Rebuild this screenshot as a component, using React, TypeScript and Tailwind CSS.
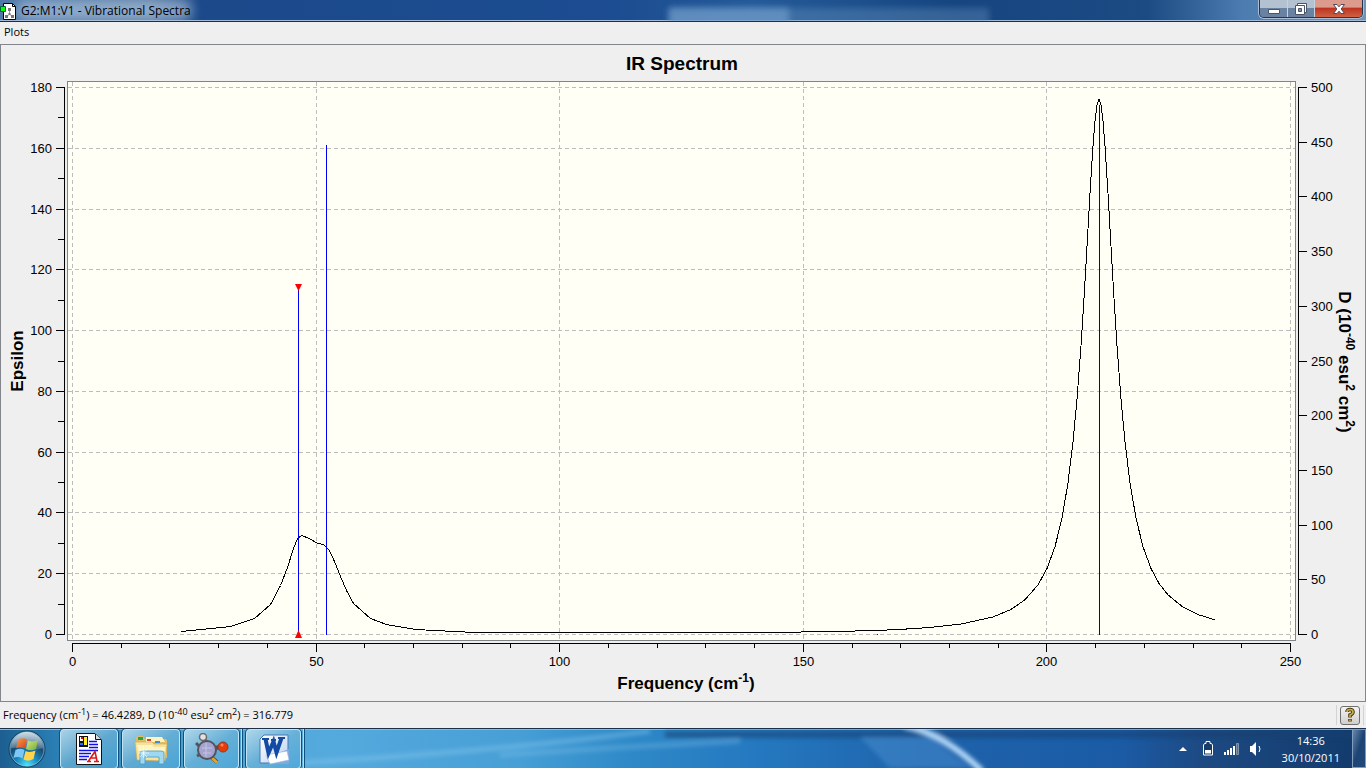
import type { ReactNode } from "react";

const X0 = 72;
const X_SCALE = 1218 / 250;
const Y0 = 634;
const Y_SPAN = 547;

const px = (f: number) => Math.round(X0 + f * X_SCALE) + 0.5;
const yLeft = (v: number) => Math.round(Y0 - (v / 180) * Y_SPAN) + 0.5;
const yRight = (v: number) => Math.round(Y0 - (v / 500) * Y_SPAN) + 0.5;

const range = (from: number, to: number, step: number) =>
  Array.from({ length: Math.round((to - from) / step) + 1 }, (_, i) => from + i * step);

const lowBand: [number, number][] = [
  [181, 631], [230, 626], [254, 618], [270, 604], [280, 585], [287, 567], [293, 548], [297, 538],
  [301, 535], [309, 538], [317, 543], [323, 544], [329, 550], [334, 561], [340, 576], [346, 590],
  [353, 603], [370, 618], [386, 624], [415, 629], [474, 632], [768, 632], [834, 631], [876, 630],
];
const highOffsets = [
  -198, -169, -138, -106, -88, -74, -61, -52, -44, -37, -31, -26, -22, -18, -15, -12, -9, -6, -4, -2, 0,
  2, 4, 6, 9, 12, 15, 18, 22, 26, 31, 37, 44, 52, 60, 69, 84, 100, 116,
];
const highBand = highOffsets.map((d): [number, number] => [
  1098.5 + d,
  Y0 - 535 / (1 + (d / 19.5) ** 2),
]);
const curve = [...lowBand, ...highBand].map(([x, y]) => `${x + 0.5},${y + 0.5}`).join(" ");

function SpectrumChart() {
  return (
    <svg
      viewBox="1 45 1364 656"
      className="block min-h-0 w-full flex-1 font-['Liberation_Sans',Arial,sans-serif]"
      role="img"
      aria-label="IR Spectrum"
    >
      <g shapeRendering="crispEdges" fill="none" stroke="#000">
        <rect x="67.5" y="81.5" width="1228" height="559" fill="#fffff5" stroke="#808487" />
        <g stroke="#bdbdbd" strokeDasharray="4 3">
          {range(0, 250, 50).map((f) => (
            <path key={f} d={`M${px(f)} 82V640`} />
          ))}
          {range(0, 180, 20).map((v) => (
            <path key={v} d={`M68 ${yLeft(v)}H1295`} />
          ))}
        </g>
        <path d="M64.5 87V635M1298.5 87V635M72 643.5H1291" />
        {range(0, 180, 10).map((v) => (
          <path key={v} d={`M${v % 20 ? 58 : 56} ${yLeft(v)}H65`} />
        ))}
        {range(0, 500, 50).map((v) => (
          <path key={v} d={`M1298 ${yRight(v)}H1307`} />
        ))}
        {range(0, 250, 10).map((f) => (
          <path key={f} d={`M${px(f)} 643V${f % 50 ? 648 : 652}`} />
        ))}
        <path d="M298.5 289V634M326.5 145V635M877 634.5H878" stroke="#0000f5" />
        <path d="M1099.500 105V635" stroke="#0000c0" />
        <polyline points={curve} />
      </g>
      <path d="M295 284H302L298.5 291ZM295 638H302L298.5 630Z" fill="#f00" />

      <g fontSize="13">
        <g textAnchor="end">
          {range(0, 180, 20).map((v) => (
            <text key={v} x="52" y={yLeft(v) + 4.5}>{v}</text>
          ))}
        </g>
        {range(0, 500, 50).map((v) => (
          <text key={v} x="1311" y={yRight(v) + 4.5}>{v}</text>
        ))}
        <g textAnchor="middle">
          {range(0, 250, 50).map((f) => (
            <text key={f} x={px(f)} y="666">{f}</text>
          ))}
        </g>
      </g>
      <g fontWeight="bold" textAnchor="middle">
        <text x="682" y="70" fontSize="19">IR Spectrum</text>
        <g fontSize="17">
          <text x="686" y="689">
            Frequency (cm<tspan dy="-7" fontSize="12">-1</tspan><tspan dy="7">)</tspan>
          </text>
          <text transform="translate(23 361) rotate(-90)">Epsilon</text>
          <text transform="translate(1339 362) rotate(90)">
            D (10<tspan dy="-7" fontSize="12">-40</tspan><tspan dy="7"> esu</tspan>
            <tspan dy="-7" fontSize="12">2</tspan><tspan dy="7"> cm</tspan>
            <tspan dy="-7" fontSize="12">2</tspan><tspan dy="7">)</tspan>
          </text>
        </g>
      </g>
    </svg>
  );
}

function MoleculeDocIcon() {
  return (
    <svg width="17" height="17" viewBox="0 0 17 17" aria-hidden="true">
      <path d="M3.5.5H12.5L15.5 3.5V16.5H3.5Z" fill="#fff" stroke="#000" />
      <path d="M12.5.5V3.5H15.5" fill="none" stroke="#000" />
      <path d="M9.5 7V11L6.5 14M9.5 11L12.5 14" stroke="#999" fill="none" />
      <path d="M8 5h3v3H8zM5 12h3v3H5zM11 12h3v3h-3zM8.500 10h2v2h-2z" fill="#777" />
      <path d="M.5 3.500H5.500V8.500H.5Z" fill="#0f0" stroke="#063" />
    </svg>
  );
}

function StartOrb() {
  return (
    <svg width="40" height="40" viewBox="0 0 40 40" aria-hidden="true">
      <defs>
        <radialGradient id="orb" cx="50%" cy="95%" r="90%">
          <stop offset="0" stopColor="#4fe3ff" />
          <stop offset=".35" stopColor="#1789bd" />
          <stop offset=".65" stopColor="#174b73" />
          <stop offset="1" stopColor="#6b94ad" />
        </radialGradient>
        <linearGradient id="gloss" x1="0" y1="0" x2="0" y2="1">
          <stop offset="0" stopColor="#fff" stopOpacity=".65" />
          <stop offset="1" stopColor="#fff" stopOpacity=".15" />
        </linearGradient>
        <linearGradient id="flagRed" x1="0" y1="0" x2="1" y2="1">
          <stop offset="0" stopColor="#f7a04a" />
          <stop offset="1" stopColor="#d8421c" />
        </linearGradient>
        <linearGradient id="flagGreen" x1="0" y1="0" x2="1" y2="1">
          <stop offset="0" stopColor="#d7e88a" />
          <stop offset="1" stopColor="#6fae2b" />
        </linearGradient>
      </defs>
      <circle cx="20" cy="20" r="18" fill="url(#orb)" stroke="#123f60" />
      <circle cx="20" cy="20" r="17" fill="none" stroke="#9fc4da" strokeOpacity=".6" />
      <path d="M4 19A16 16 0 0 1 36 19Q28 22 20 20T4 19Z" fill="url(#gloss)" />
      <path d="M11.500 10.500Q16 8 20 10.500L18 19Q14 17 9 19Z" fill="url(#flagRed)" />
      <path d="M21 11.500Q25 13.500 31 11L29 20Q24 22.500 19 20Z" fill="url(#flagGreen)" />
      <path d="M8.500 21Q13 18.500 17.500 21L15.500 29.500Q11 27 6.500 29Z" fill="#7cc7f5" />
      <path d="M18.500 22Q23 24 28.500 21.500L26.500 30Q21 33 16.500 30.500Z" fill="#ffd34a" />
    </svg>
  );
}

function DocumentIcon() {
  return (
    <svg width="32" height="32" viewBox="0 0 32 32" aria-hidden="true">
      <path d="M3.500 .5H22L28.500 7V31.500H3.500Z" fill="#fff" stroke="#111" />
      <path d="M22.500 1V6.500H28" fill="#ddd" stroke="#111" />
      <path d="M6 3H15V14H6Z" fill="#111" />
      <path d="M7 4H10V8H7Z" fill="#fff" />
      <path d="M8 4H10V6H8Z" fill="#f00" />
      <path d="M11 4H14V12H11Z" fill="#ffec27" />
      <path d="M7 10H10V12H7Z" fill="#2b6cff" />
      <path
        d="M16 8.500H24M16 11.500H25M16 14.500H25M6 17.500H25M6 20.500H18M6 23.500H16M6 26.500H14"
        stroke="#1010e8"
        strokeWidth="1.6"
      />
      <path d="M14 28.500H18M21 28.500H26M15.500 28L22 18.500L24 28M18 25H23" stroke="#e01818" strokeWidth="1.600" fill="none" />
    </svg>
  );
}

function ExplorerIcon() {
  return (
    <svg width="34" height="32" viewBox="0 0 34 32" aria-hidden="true">
      <path d="M2 6Q2 3 5 3H9L11 6H31Q33 6 33 8V25H3Z" fill="#e3bd60" />
      <path d="M4 4H9V7H4Z" fill="#28a745" />
      <path d="M12 4H28L31 9H12Z" fill="#fff3c2" />
      <path d="M13 6H17V8H13Z" fill="#d9402e" />
      <path d="M21 8H26V10H21Z" fill="#3b8ede" />
      <path d="M1 9H18L20 11H33L31 28L3 27Z" fill="#f7e29a" stroke="#c9a857" strokeWidth=".6" />
      <path d="M3 12H18L20 14H31V18H4Z" fill="#fff4c4" />
      <path d="M6 31V20Q6 18 9 18H27Q30 18 30 20V31H25V24H11V31Z" fill="#9ed8f2" stroke="#4c9bc4" strokeWidth=".8" />
      <path d="M9.500 13V25M4 20H15M6 16L13 24M13 16L6 24" stroke="#fff" strokeOpacity=".8" strokeWidth=".8" />
    </svg>
  );
}

function MoleculeIcon() {
  return (
    <svg width="34" height="32" viewBox="0 0 34 32" aria-hidden="true">
      <path d="M9 6L11 10M18 16L24 14M16 24L22 29" stroke="#5c4a40" strokeWidth="4" />
      <path d="M17 25L22 29.500" stroke="#e4a32b" strokeWidth="3" />
      <path d="M4 13L1 10M4 22L2 23" stroke="#555" strokeWidth="3" />
      <circle cx="12" cy="17" r="9" fill="#a5a4cf" stroke="#55535f" strokeWidth="2" />
      <path d="M7 15H17M8 20H16M11 10V24" stroke="#c4c2e4" strokeWidth="1" />
      <circle cx="8" cy="4" r="3.500" fill="#e2e2e2" stroke="#6a6a6a" strokeWidth="1.500" />
      <circle cx="28" cy="14" r="5" fill="#e63c0c" stroke="#8d3c24" />
      <circle cx="27" cy="12" r="1.500" fill="#ff8858" />
    </svg>
  );
}

function WordIcon() {
  return (
    <svg width="32" height="32" viewBox="0 0 32 32" aria-hidden="true">
      <defs>
        <linearGradient id="wordPage" x1="0" y1="0" x2="1" y2="1">
          <stop offset="0" stopColor="#fff" />
          <stop offset="1" stopColor="#b9d2f1" />
        </linearGradient>
      </defs>
      <path d="M2 6L6 2H30V30H2Z" fill="url(#wordPage)" stroke="#4a78b5" />
      <path d="M20 20L31 16V31H14Z" fill="#7fa9df" />
      <path d="M8 22L29 18L31 27L12 31Z" fill="#fff" stroke="#9db9dd" strokeWidth=".6" />
      <path d="M7.500 6L10.500 20L15.500 8.500L18.500 19.500L23.500 5" fill="none" stroke="#134aa4" strokeWidth="4" />
      <path d="M4 6H11M13 7H18M20 5H27" stroke="#134aa4" strokeWidth="2" />
    </svg>
  );
}

const taskButton =
  "flex h-10 items-center justify-center rounded-sm border border-[#bfe4f6] bg-linear-to-br from-[#b9dcec]/90 via-[#6fb4d8]/70 to-[#4aa8da]/60 shadow-[0_0_0_1px_#12507c]";

function TaskButton({ label, stacked, children }: { label: string; stacked?: boolean; children: ReactNode }) {
  if (!stacked) {
    return (
      <button type="button" aria-label={label} className={`${taskButton} w-[58px]`}>
        {children}
      </button>
    );
  }
  return (
    <div className="flex h-10 border-r border-[#dff4ff]/70 pr-0.5 shadow-[1px_0_0_#12507c]">
      <button type="button" aria-label={label} className={`${taskButton} w-[55px]`}>
        {children}
      </button>
    </div>
  );
}

function TitleBar() {
  return (
    <header className="relative flex h-[22px] shrink-0 items-start justify-between overflow-hidden border-b border-[#1b2d4d] bg-[linear-gradient(90deg,#4f79a9_0px,#55789f_150px,#1b498a_200px,#1c4c91_45%,#245b99_55%,#164580_70%,#1c4a83_84%,#4c7cb0_91%,#7093b7_100%)] shadow-[inset_0_-1px_0_#a3bad6]">
      <div className="absolute top-0 left-4 h-5 w-44 rounded-full bg-[#b9cde6]/60 blur-[6px]" />
      <div className="absolute top-2 left-[49%] h-5 w-[120px] bg-[#7aa5d3]/60 blur-[3px]" />
      <div className="absolute top-2 left-[49%] h-5 w-[320px] bg-[#6f9ac4]/35 blur-[3px]" />
      <div className="relative flex items-center gap-1 pt-[2px]">
        <MoleculeDocIcon />
        <h1 className="text-[12px] leading-[18px] text-black">G2:M1:V1 - Vibrational Spectra</h1>
      </div>
      <div className="relative mr-[3px] flex h-[18px] overflow-hidden rounded-b-[5px] border border-t-0 border-[#26364d] shadow-[0_0_0_1px_#a9bed6]">
        <button type="button" aria-label="Minimize" className="flex w-7 items-center justify-center border-r border-[#c4d2e2] bg-linear-to-b from-[#b3c1d1] from-45% to-[#6a82a2] to-50%">
          <svg width="14" height="14" viewBox="0 0 14 14" aria-hidden="true">
            <path d="M1.500 7.500H12.500V11.500H1.500Z" fill="#fff" stroke="#4a5567" />
          </svg>
        </button>
        <button type="button" aria-label="Restore" className="flex w-[27px] items-center justify-center border-r border-[#c4d2e2] bg-linear-to-b from-[#b3c1d1] from-45% to-[#6a82a2] to-50%">
          <svg width="14" height="14" viewBox="0 0 14 14" aria-hidden="true">
            <path d="M3.500 1.500H12.500V10.500H3.500Z" fill="#fff" stroke="#4a5567" />
            <path d="M1.500 3.500H10.500V12.500H1.500Z" fill="#fff" stroke="#4a5567" />
            <path d="M4.500 6.500H7.500V9.500H4.500Z" fill="#7d93ad" stroke="#4a5567" />
          </svg>
        </button>
        <button type="button" aria-label="Close" className="flex w-[47px] items-center justify-center bg-linear-to-b from-[#dc9b8d] from-40% via-[#bd3520] via-50% to-[#cf6044]">
          <svg width="14" height="14" viewBox="0 0 14 14" aria-hidden="true">
            <path d="M1.500 2.500H5L7 4.800L9 2.500H12.500L9.200 7L12.500 11.500H9L7 9.200L5 11.500H1.500L4.800 7Z" fill="#fff" stroke="#50495a" />
          </svg>
        </button>
      </div>
    </header>
  );
}

function StatusBar() {
  return (
    <footer className="flex h-[26px] shrink-0 items-center justify-between pr-[2px] pl-[3px]">
      <p className="text-[11px] leading-4 text-black">
        Frequency (cm<sup className="text-[9px]">-1</sup>) = 46.4289, D (10<sup className="text-[9px]">-40</sup> esu
        <sup className="text-[9px]">2</sup> cm<sup className="text-[9px]">2</sup>) = 316.779
      </p>
      <div className="flex h-5 items-center border-x border-[#d3d3d3] px-[3px]">
        <button
          type="button"
          aria-label="Help"
          className="flex h-[19px] w-5 items-center justify-center rounded-[3px] border border-[#707070] bg-linear-to-b from-[#f4f4f4] to-[#cfcfcf]"
        >
          <svg width="12" height="16" viewBox="0 0 12 16" aria-hidden="true">
            <path d="M3 5Q3 2.500 6 2.500T9 5Q9 7 6 8V10.500M6 12V14.500" fill="none" stroke="#4b3b08" strokeWidth="3.600" />
            <path d="M3 5Q3 2.500 6 2.500T9 5Q9 7 6 8V10M6 12.500V14" fill="none" stroke="#c9b052" strokeWidth="1.600" />
          </svg>
        </button>
      </div>
    </footer>
  );
}

function Taskbar() {
  return (
    <nav aria-label="Taskbar" className="relative flex h-10 shrink-0 items-stretch justify-between overflow-hidden border-t border-[#1b3149] bg-[linear-gradient(90deg,#1c5f90_0%,#2a7eb3_4%,#4aa3d2_14%,#55aadd_24%,#479fd6_38%,#2e89c7_46%,#2579c0_55%,#1e63ab_68%,#1b5ba6_82%,#1d4a83_88%,#123a6b_100%)] shadow-[inset_0_1px_0_#8fb8d8]">
      <svg className="absolute inset-0 size-full" viewBox="0 0 1366 39" preserveAspectRatio="none" aria-hidden="true">
        <defs>
          <filter id="soft" x="-10%" y="-50%" width="120%" height="200%">
            <feGaussianBlur stdDeviation="2" />
          </filter>
        </defs>
        <g filter="url(#soft)">
          <path d="M300 34Q500 22 650 2" stroke="#8ccaf0" strokeOpacity=".4" strokeWidth="5" fill="none" />
          <path d="M500 26Q620 18 740 12" stroke="#8ccaf0" strokeOpacity=".3" strokeWidth="5" fill="none" />
          <path d="M665 2H1366V9H665Z" fill="#10406f" fillOpacity=".55" />
          <path d="M860 8H930L970 39H890Z" fill="#5a9ddc" fillOpacity=".35" />
          <path d="M905 -4Q945 6 982 42" stroke="#b4d8f8" strokeWidth="6" fill="none" />
        </g>
      </svg>
      <div className="relative flex items-start">
        <button type="button" aria-label="Start" className="flex w-[54px] items-center justify-center">
          <StartOrb />
        </button>
        <div className="flex gap-1 pl-1.5">
          <TaskButton label="GaussView"><DocumentIcon /></TaskButton>
          <TaskButton label="File explorer"><ExplorerIcon /></TaskButton>
          <TaskButton label="Molecules" stacked><MoleculeIcon /></TaskButton>
          <TaskButton label="Word" stacked><WordIcon /></TaskButton>
        </div>
      </div>
      <div className="relative flex items-center text-white">
        <button type="button" aria-label="Show hidden icons" className="mr-3 flex">
          <svg width="10" height="6" viewBox="0 0 10 6" aria-hidden="true">
            <path d="M1 5L5 1L9 5Z" fill="#fff" />
          </svg>
        </button>
        <div className="flex items-center gap-2">
          <svg width="16" height="18" viewBox="0 0 16 18" aria-hidden="true">
            <path d="M4.500 3.500H6V1.500H10V3.500H11.500L12.500 5V15H3.500V5Z" fill="#183b68" stroke="#fff" />
            <path d="M5 10H11V13.500H5Z" fill="#fff" />
          </svg>
          <svg width="16" height="16" viewBox="0 0 16 16" aria-hidden="true">
            <path d="M0 11H2V14H0ZM3 9H5V14H3ZM6 7H8V14H6ZM9 5H11V14H9Z" fill="#fff" />
            <path d="M12.500 2.500H14.500V13.500H12.500Z" fill="#53708f" stroke="#7e95ad" />
          </svg>
          <svg width="16" height="16" viewBox="0 0 16 16" aria-hidden="true">
            <path d="M2 5H4L8 1V15L4 11H2Z" fill="#fff" />
            <path d="M11 5Q13 8 11 11" fill="none" stroke="#fff" />
          </svg>
        </div>
        <time dateTime="2011-10-30T14:36" className="mr-3 ml-[18px] text-center text-[11px] leading-[17px]">
          14:36
          <br />
          30/10/2011
        </time>
        <button
          type="button"
          aria-label="Show desktop"
          className="h-full w-[14px] border border-[#7f9dbd] bg-linear-to-br from-[#6587ab] via-[#1d4473] to-[#204a7c]"
        />
      </div>
    </nav>
  );
}

export default function App() {
  return (
    <div className="flex h-screen flex-col overflow-hidden bg-[#efefef] font-['Open_Sans','Noto_Sans',sans-serif]">
      <TitleBar />
      <nav aria-label="Menu" className="flex h-[22px] shrink-0 items-start px-1 pt-[2px]">
        <button type="button" className="text-[11px] leading-4 text-black">Plots</button>
      </nav>
      <main className="flex min-h-0 flex-1 flex-col border border-[#83868c]">
        <SpectrumChart />
      </main>
      <StatusBar />
      <Taskbar />
    </div>
  );
}
